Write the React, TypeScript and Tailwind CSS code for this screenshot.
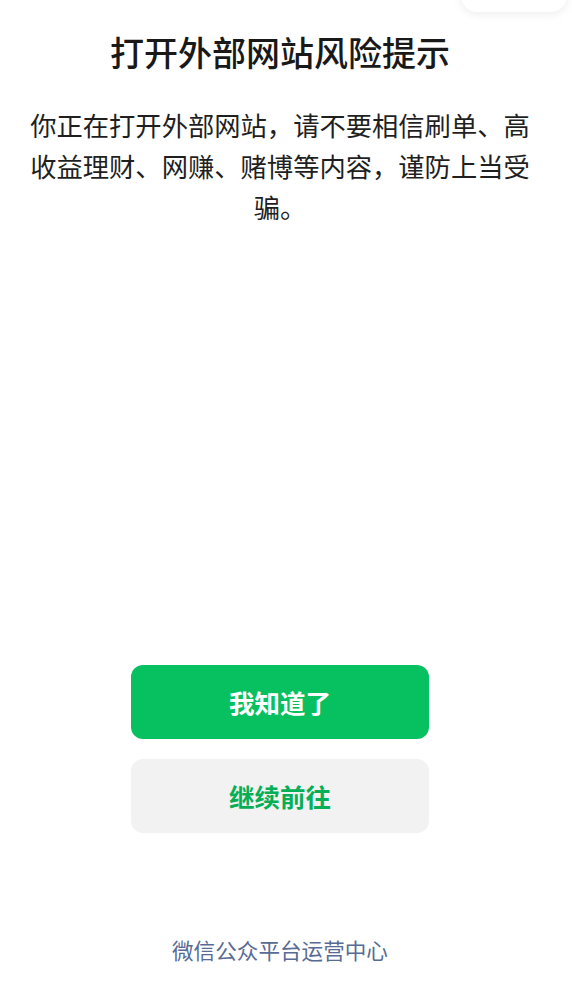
export default function App() {
  return (
    <div
      className="relative flex h-screen flex-col overflow-hidden bg-white pr-[12px]"
      style={{ fontFamily: '"Noto Sans CJK SC", "Noto Sans", sans-serif' }}
    >
      {/* floating capsule peeking from the top */}
      <div className="absolute right-[5px] top-[-32px] h-[44px] w-[106px] rounded-2xl bg-white shadow-[0_2px_10px_rgba(0,0,0,0.08)]" />

      <h1 className="mt-[32px] text-center text-[34px] font-medium leading-[40px] text-[#191919]">
        打开外部网站风险提示
      </h1>
      <p className="mx-[26px] mt-[32px] text-center text-[26.3px] leading-[41px] text-[#1f1f1f]">
        你正在打开外部网站，请不要相信刷单、高收益理财、网赚、赌博等内容，谨防上当受骗。
      </p>

      <div className="flex-1" />

      <div className="flex flex-col items-center gap-[20px]">
        <button className="h-[74px] w-[298px] rounded-[12px] bg-[#07c160] text-[25.5px] font-bold text-white">
          我知道了
        </button>
        <button className="h-[74px] w-[298px] rounded-[12px] bg-[#f2f2f2] text-[25.5px] font-bold text-[#06ae56]">
          继续前往
        </button>
      </div>

      <p className="mb-[35px] mt-[102px] text-center text-[21.6px] leading-[30px] text-[#576b95]">
        微信公众平台运营中心
      </p>
    </div>
  );
}
